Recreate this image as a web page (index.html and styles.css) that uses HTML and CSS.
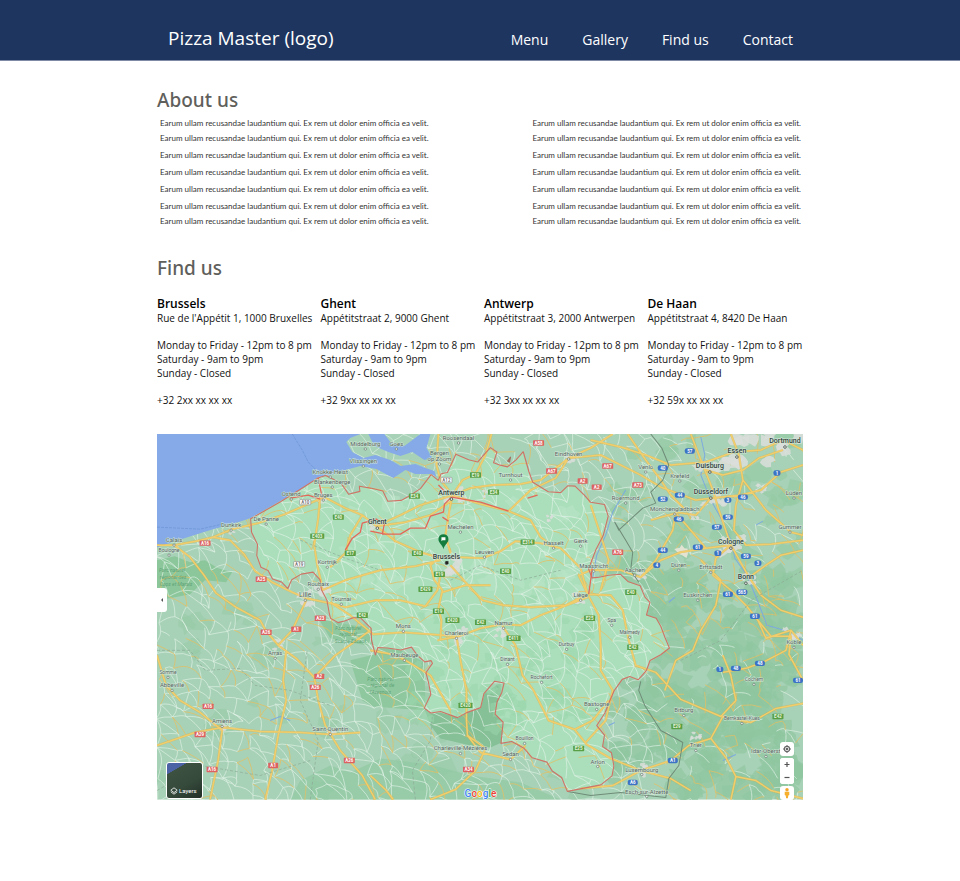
FILE: index.html
```html
<!DOCTYPE html>
<html lang="en">
<head>
<meta charset="utf-8">
<meta name="viewport" content="width=device-width, initial-scale=1">
<title>Pizza Master</title>
<link rel="stylesheet" href="styles.css">
</head>
<body>
<header class="site-header">
  <div class="container header-row">
    <a class="logo" href="#">Pizza Master (logo)</a>
    <nav class="nav">
      <a href="#menu">Menu</a>
      <a href="#gallery">Gallery</a>
      <a href="#find-us">Find us</a>
      <a href="#contact">Contact</a>
    </nav>
  </div>
</header>
<main class="container">
  <section class="about" id="about">
    <h2>About us</h2>
    <div class="about-columns">
      <div class="copy">
        <p>Earum ullam recusandae laudantium qui. Ex rem ut dolor enim officia ea velit.<br>Earum ullam recusandae laudantium qui. Ex rem ut dolor enim officia ea velit.</p>
        <p>Earum ullam recusandae laudantium qui. Ex rem ut dolor enim officia ea velit.</p>
        <p>Earum ullam recusandae laudantium qui. Ex rem ut dolor enim officia ea velit.</p>
        <p>Earum ullam recusandae laudantium qui. Ex rem ut dolor enim officia ea velit.</p>
        <p>Earum ullam recusandae laudantium qui. Ex rem ut dolor enim officia ea velit.<br>Earum ullam recusandae laudantium qui. Ex rem ut dolor enim officia ea velit.</p>
      </div>
      <div class="copy">
        <p>Earum ullam recusandae laudantium qui. Ex rem ut dolor enim officia ea velit.<br>Earum ullam recusandae laudantium qui. Ex rem ut dolor enim officia ea velit.</p>
        <p>Earum ullam recusandae laudantium qui. Ex rem ut dolor enim officia ea velit.</p>
        <p>Earum ullam recusandae laudantium qui. Ex rem ut dolor enim officia ea velit.</p>
        <p>Earum ullam recusandae laudantium qui. Ex rem ut dolor enim officia ea velit.</p>
        <p>Earum ullam recusandae laudantium qui. Ex rem ut dolor enim officia ea velit.<br>Earum ullam recusandae laudantium qui. Ex rem ut dolor enim officia ea velit.</p>
      </div>
    </div>
  </section>
  <section class="find" id="find-us">
    <h2>Find us</h2>
    <div class="stores">
      <article class="store">
        <h3>Brussels</h3>
        <p>Rue de l'Appétit 1, 1000 Bruxelles</p>
        <p>Monday to Friday - 12pm to 8 pm<br>Saturday - 9am to 9pm<br>Sunday - Closed</p>
        <p>+32 2xx xx xx xx</p>
      </article>
      <article class="store">
        <h3>Ghent</h3>
        <p>Appétitstraat 2, 9000 Ghent</p>
        <p>Monday to Friday - 12pm to 8 pm<br>Saturday - 9am to 9pm<br>Sunday - Closed</p>
        <p>+32 9xx xx xx xx</p>
      </article>
      <article class="store">
        <h3>Antwerp</h3>
        <p>Appétitstraat 3, 2000 Antwerpen</p>
        <p>Monday to Friday - 12pm to 8 pm<br>Saturday - 9am to 9pm<br>Sunday - Closed</p>
        <p>+32 3xx xx xx xx</p>
      </article>
      <article class="store">
        <h3>De Haan</h3>
        <p>Appétitstraat 4, 8420 De Haan</p>
        <p>Monday to Friday - 12pm to 8 pm<br>Saturday - 9am to 9pm<br>Sunday - Closed</p>
        <p>+32 59x xx xx xx</p>
      </article>
    </div>
    <div class="map">
      <svg id="map-canvas" class="map-canvas" viewBox="157 434 645 365" role="img" aria-label="Map of Belgium"></svg>
      <button class="map-btn drawer" type="button" aria-label="Open side panel"><svg viewBox="0 0 10 24" width="10" height="24"><path d="M6 10v4l-2-2z" fill="#555"/></svg></button>
      <button class="layers" type="button">
        <svg viewBox="0 0 10 10" width="8" height="8" fill="none" stroke="#fff"><path d="M5 1l4 3-4 3-4-3zM1 6l4 3 4-3"/></svg>
        Layers
      </button>
      <div class="controls">
        <button class="map-btn" type="button" aria-label="Your location"><svg viewBox="0 0 14 14" width="14" height="14"><circle cx="7" cy="7" r="2.6" fill="none" stroke="#666" stroke-width="1.1"/><circle cx="7" cy="7" r="1.3" fill="#666"/><path d="M7 3v2M7 9v2M3 7h2M9 7h2" stroke="#666"/></svg></button>
        <div class="zoom">
          <button class="map-btn" type="button" aria-label="Zoom in"><svg viewBox="0 0 14 13" width="14" height="13"><path d="M4.500 6.500h5M7 4v5" stroke="#555" stroke-width="1.2"/></svg></button>
          <button class="map-btn" type="button" aria-label="Zoom out"><svg viewBox="0 0 14 13" width="14" height="13"><path d="M4.500 6.500h5" stroke="#555" stroke-width="1.2"/></svg></button>
        </div>
        <button class="map-btn" type="button" aria-label="Street View"><svg viewBox="0 0 14 14" width="14" height="14"><circle cx="7" cy="3.700" r="1.700" fill="#f2a52b"/><path d="M4.700 5.800h4.600v3.200l-1 .4-.4 2.800H6.100l-.4-2.800-1-.4z" fill="#f7b02c"/></svg></button>
      </div>
    </div>
  </section>
</main>
<script src="map.js"></script>
</body>
</html>
```
FILE: styles.css
```css
* { box-sizing: border-box; }

body {
  margin: 0;
  background: #fff;
  color: #111;
  font-family: "Open Sans", "Noto Sans", sans-serif;
}

h2, h3, p { margin: 0; }

a { color: inherit; text-decoration: none; }

.container {
  max-width: 646px;
  margin: 0 auto;
}

.site-header {
  background: #1e3560;
  border-bottom: 1px solid #7d8ba6;
  color: #fff;
}

.header-row {
  display: flex;
  justify-content: space-between;
  align-items: center;
  padding: 24px 10px 8px 11px;
}

.logo { font-size: 19px; line-height: 28px; }

.nav {
  display: flex;
  gap: 34px;
  padding-top: 4px;
  font-size: 14px;
  line-height: 24px;
}

h2 {
  color: #5f5f5c;
  font-family: "Noto Sans", sans-serif;
  font-size: 19px;
  font-weight: 500;
  line-height: 28px;
}

.about { padding-top: 25px; }

.about-columns {
  display: flex;
  justify-content: space-between;
  gap: 24px;
  padding: 2px 2px 0 3px;
}

.copy {
  display: flex;
  flex-direction: column;
  gap: 2px;
  color: #333;
  font-family: Lato, sans-serif;
  font-size: 8px;
  line-height: 15px;
}

.find { padding-top: 25px; }

.stores {
  display: grid;
  grid-template-columns: repeat(4, 1fr);
  gap: 8px;
  padding-top: 15px;
}

.store {
  font-size: 10px;
  line-height: 14px;
}

.store h3 {
  font-size: 12px;
  font-weight: 600;
  line-height: 14px;
  color: #000;
}

.store p + p { margin-top: 13px; }

.map {
  position: relative;
  margin: 27px 0 40px;
}

.map-canvas {
  display: block;
  width: 100%;
  height: auto;
  font-family: Roboto, sans-serif;
}

.map-btn {
  display: flex;
  justify-content: center;
  padding: 0;
  border: 0;
  border-radius: 3px;
  background: #fff;
}

.drawer {
  position: absolute;
  top: 154px;
  left: 0;
  border-radius: 0 3px 3px 0;
}

.controls {
  position: absolute;
  right: 9px;
  bottom: 0;
  display: flex;
  flex-direction: column;
  gap: 2px;
}

.zoom {
  display: flex;
  flex-direction: column;
  background: #fff;
  border-radius: 3px;
}

.layers {
  position: absolute;
  left: 9px;
  bottom: 1px;
  display: flex;
  align-items: flex-end;
  gap: 1px;
  width: 37px;
  height: 37px;
  padding: 0 3px 3px;
  border: 1px solid #fff;
  border-radius: 3px;
  background: linear-gradient(150deg, #4b62a5 20%, #3d5141 21%, #354a3b 60%, #222e26);
  color: #fff;
  font: 6px/8px Roboto, sans-serif;
}
```
FILE: map.js
```js
const NS = "http://www.w3.org/2000/svg";
const svg = document.getElementById("map-canvas");

function add(name, attrs, text) {
  const el = document.createElementNS(NS, name);
  for (const key in attrs) el.setAttribute(key, attrs[key]);
  if (text) el.textContent = text;
  svg.appendChild(el);
  return el;
}

function path(d, attrs) {
  return add("path", Object.assign({ d, fill: "none", "stroke-linejoin": "round" }, attrs));
}

// Repeatable pseudo-random numbers, so that the terrain is the same on every load.
let seed = 7;
function rnd() {
  seed = (seed * 16807) % 2147483647;
  return seed / 2147483647;
}

function blob(x, y, r, fill, opacity) {
  let d = "";
  for (let i = 0; i < 11; i++) {
    const a = i / 11 * Math.PI * 2;
    const q = r * (0.5 + rnd() * 0.8);
    d += (i ? "L" : "M") + (x + Math.cos(a) * q * 1.2).toFixed(1) + " " + (y + Math.sin(a) * q).toFixed(1);
  }
  path(d + "z", { fill, opacity });
}

const belgium = "M250 519L251 532 257 545 256 556 260 567 268 570 273 579 281 582 288 588 292 580 302 574 312 572 319 579 321 590 326 600 328 612 330 618 337 622 345 620 352 617 360 618 370 628 372 640 375 654 378 648 388 648 400 650 411 646 416 654 424 662 430 660 431 664 425 672 427 682 431 693 424 707 430 713 440 712 458 717 466 712 480 708 484 693 495 680 503 682 502 692 497 702 494 713 503 722 501 742 512 741 523 747 531 757 546 761 552 770 562 777 567 791 580 788 600 784 612 775 614 765 610 752 602 745 603 735 597 725 604 712 608 702 613 690 621 680 628 677 638 680 645 670 650 661 660 655 669 647 665 637 661 625 655 618 646 615 650 602 645 596 639 585 628 582 620 575 608 574 596 577 591 578 588 568 596 550 602 535 608 515 604 505 590 503 583 496 575 487 568 485 560 492 548 491 533 483 528 472 522 452 515 460 508 466 499 465 493 462 497 452 490 448 484 454 478 462 468 460 455 454 448 472 440 473 438 480 431 474 420 488 410 495 400 500 388 501 383 490 370 487 358 486 360 492 348 494 340 482 325 476 318 477 300 490 280 501z";
const sea = "M157 434H360L350 438 346 442 352 452 363 458 375 455 390 460 400 466 415 464 425 468 434 471 436 477 431 474 415 474 405 470 393 478 376 469 360 466 345 470 330 475 318 477 300 490 280 501 250 518 235 523 213 529 200 533 175 541 157 547z";

add("rect", { x: 157, y: 434, width: 645, height: 365, fill: "#a8d2b7" });

// Woodland: sparse in the west, dense in the Eifel and the Ardennes.
for (let i = 0; i < 55; i++) blob(160 + rnd() * 450, 560 + rnd() * 235, 4 + rnd() * 9, "#96caa5", 0.5);
for (let i = 0; i < 210; i++) {
  const x = 600 + rnd() * 200, y = 575 + rnd() * 220;
  blob(x, y, 5 + rnd() * 11, "#8fc6a0", 0.65);
}
for (let i = 0; i < 45; i++) blob(610 + rnd() * 190, 440 + rnd() * 140, 4 + rnd() * 9, "#93c9a3", 0.6);
path("M157 560L175 556 190 562 205 560 218 568 232 572 226 582 205 580 190 594 170 598 157 600z", { fill: "#8cc79b" });
path("M318 618L335 622 370 628 375 654 350 660 362 700 372 706 425 710 424 662 400 650 360 644 330 638z", { fill: "#8fc89e" });
path("M424 708L458 717 484 693 500 682 502 722 501 742 490 747 470 745 440 738 430 725z", { fill: "#86c096" });
path("M300 780L330 765 350 772 380 758 430 764 470 775 520 782 560 799H290z", { fill: "#92c9a2", opacity: "0.7" });
path(belgium, { fill: "#abdfbb" });
for (let i = 0; i < 70; i++) blob(400 + rnd() * 190, 600 + rnd() * 130, 3 + rnd() * 6, "#99d5ab", 0.5);
for (let i = 0; i < 50; i++) blob(300 + rnd() * 290, 495 + rnd() * 120, 3 + rnd() * 6, "#b9e4c6", 0.6);

// Minor roads: a jittered grid with most of its edges drawn.
const step = 13, cols = 51, rows = 30, grid = [];
for (let r = 0; r < rows; r++) {
  grid.push([]);
  for (let c = 0; c < cols; c++) grid[r].push([155 + c * step + rnd() * 11, 430 + r * step + rnd() * 11]);
}
let minor = "", lanes = "";
for (let r = 0; r < rows - 1; r++) {
  for (let c = 0; c < cols - 1; c++) {
    const a = grid[r][c], targets = [grid[r][c + 1], grid[r + 1][c], grid[r + 1][c + 1]];
    for (const b of targets) {
      const k = rnd();
      const seg = `M${a[0].toFixed(1)} ${a[1].toFixed(1)}Q${((a[0] + b[0]) / 2 + rnd() * 4).toFixed(1)} ${((a[1] + b[1]) / 2 - rnd() * 4).toFixed(1)} ${b[0].toFixed(1)} ${b[1].toFixed(1)}`;
      if (k < 0.5) { if (a[0] < 650 || k < 0.1) minor += seg; }
      else if (k < 0.63) lanes += seg;
    }
  }
}
path(minor, { stroke: "#e2f3e7", "stroke-width": 0.8, opacity: 0.8 });
path(lanes, { stroke: "#e3bf62", "stroke-width": 0.9, opacity: 0.85 });

path(sea, { fill: "#85aae7" });
path("M368 434H384L390 442 404 446 412 440 420 434H430L426 448 432 458 424 460 412 452 400 456 388 452 374 446z", { fill: "#85aae7" });
path("M292 434L302 450 308 462 316 470M157 527L200 529 222 524", { stroke: "#6d93d6", "stroke-width": 0.7, "stroke-dasharray": "3 1" });
path("M700 437L704 455 700 475 710 500 720 518 730 540 734 558 746 575 756 599 766 625 790 632 802 640M592 578L596 555 605 535 612 512 625 490M270 720L280 716 290 720M608 725L614 722M722 760L735 754M755 525L762 521M668 602L674 597", { stroke: "#7daade", "stroke-width": 1 });

// Built-up areas.
[[447,565,12],[452,495,10],[376,526,6],[322,586,9],[306,598,9],[456,636,9],[501,631,6],[580,597,7],[733,452,19],[705,470,11],[782,448,17],[712,498,10],[730,545,12],[747,578,7],[640,577,6],[791,634,8],[568,458,7],[278,645,6],[220,725,6],[330,733,5],[640,770,7],[232,530,4],[695,735,5],[323,500,4],[487,494,4],[550,518,4],[760,488,5],[693,515,5]].forEach(([x, y, r]) => {
  for (let i = 0; i < 7; i++) blob(x + (rnd() - 0.5) * r * 2, y + (rnd() - 0.5) * r * 1.6, r * 0.35, "#dbdedb", 0.85);
});
blob(682, 551, 6, "#e2e3d2", 1);

const roads = [
  "M157 545L174 545 196 541 213 537 232 529 258 523 285 514 310 503 324 497 345 508 362 515 376 526 395 541 420 552 437 557 458 557 482 558 500 551 515 541 540 543 560 548 580 568 587 594",
  "M174 545L190 557 204 575 216 593 236 607 260 620 266 631 278 645",
  "M213 537L230 540 244 554 255 571 272 582 292 592 306 598 335 604 345 607 375 600 400 600 425 606 437 590 440 575",
  "M320 495L318 518 314 545 317 565 321 582 322 590 M362 515L350 535 345 553 330 567",
  "M376 526L400 515 420 505 440 499 452 495 470 488 492 485 520 484 540 480 568 458 590 448 612 434",
  "M452 495L449 510 445 535 450 553 M452 495L480 504 508 511 530 520 540 537 555 548 M452 495L462 480 475 474 485 455 491 434",
  "M376 526L405 522 430 515 452 500 M452 495L440 480 436 465 438 434",
  "M440 557L430 565 434 580 442 590 438 608 441 620 440 640 M450 565L465 582 482 600 503 605 530 607 565 605 587 594",
  "M437 640L458 636 480 628 501 624 520 625 540 615 587 597 M501 624L515 645 522 675 533 690 548 720 574 729 586 744 610 758 640 770",
  "M330 602L350 615 373 634 403 632 430 634 456 636 M456 636L460 660 466 690 466 720 467 735 480 752 510 759 525 745",
  "M278 645L292 630 306 600 M278 645L296 658 314 677 335 655 352 643 370 630 M286 650L283 680 286 700 278 735 272 770 265 799",
  "M157 655L166 685 180 700 200 712 222 730 218 760 210 799 M157 745L195 732 222 727 260 731 300 732 330 734 360 732",
  "M314 677L318 700 325 725 340 750 362 775 375 799 M370 650L397 655 430 675 450 710",
  "M467 735L485 748 475 770 455 789 430 799 M370 775L385 789 393 799",
  "M587 594L578 575 590 570 620 570 640 577 660 560 680 552 705 548 730 545 M587 594L598 615 600 645 600 670 612 690 605 720 585 742",
  "M587 594L610 595 622 610 628 640 635 665 655 672 680 699 720 716 735 700 730 675 722 655",
  "M640 577L655 560 672 530 675 512 695 515 710 498 M590 505L600 535 608 560 600 590",
  "M568 458L600 455 640 475 660 487 695 500 712 498 740 495 760 490 780 472 802 465",
  "M590 440L620 447 645 455 670 465 705 462 733 452 760 450 782 440 802 450",
  "M690 434L700 460 712 490 718 510 730 545 747 575 760 595 780 610 802 617",
  "M730 434L738 455 742 480 735 505 733 530 745 545 770 544 802 540 M705 470L722 475 742 470 758 458 782 450",
  "M650 520L675 513 690 530 705 548 M685 510L670 495 660 480 645 460 627 434",
  "M730 545L715 558 712 575 730 590 745 605 757 620 765 638 790 630 802 645 M700 560L720 580 715 605 700 630 692 650 675 660 664 690",
  "M757 620L770 636 790 636 788 654 802 680 M722 672L745 668 762 662 785 650 790 630",
  "M640 770L670 760 688 745 710 738 722 716 750 722 775 708 802 703 M710 738L725 757 735 776 755 780 770 790 802 798",
  "M580 788L612 785 640 770 670 778 690 790 M735 776L730 799 M574 729L592 720 608 700",
  "M747 578L765 565 780 555 802 550 M742 480L765 510 790 532 802 535",
  "M322 590L345 580 380 570 415 566 440 560 M442 592L465 585 490 585 M508 511L530 490 555 478 568 458"
].join("");
path(roads, { stroke: "#dcae3f", "stroke-width": 2.3, opacity: 0.5 });
path(roads, { stroke: "#f1cd6b", "stroke-width": 1.5 });

// Borders.
path("M650 434L661 448 668 465 662 480 650 492 655 503 642 508 618 530 614 522 625 540 632 552 630 570 638 582M640 681L638 690 644 705 660 730 675 738 682 742 678 765 668 778 665 797M567 791L590 795 620 792 665 797", { stroke: "#6f8c78", "stroke-width": 1 });
path("M157 650L190 650 205 670 240 668 255 685 290 690 330 705 M300 540L345 558 380 570 M450 580L480 565 520 580 560 570 M157 790L200 765 260 775 310 760 M415 799L412 770 430 740 432 715 M680 660L720 640 750 600 802 570 M310 799L318 740 300 700 307 650", { stroke: "#8cab96", "stroke-width": 0.7, "stroke-dasharray": "3 2" });
const jagged = belgium.replace(/(\d+) (\d+)/g, (m, x, y) => `${(+x + rnd() * 2 - 1).toFixed(1)} ${(+y + rnd() * 2 - 1).toFixed(1)}`);
path(jagged, { stroke: "#cf7366", "stroke-width": 1.1 });
path("M345 550L352 538 360 532 362 523 376 519 384 524 382 534 400 534 410 528 425 528 430 516 443 512 444 504 451 497 M451 497L480 502 508 511 M370 531L385 534 M445 492L438 485 M442 517L448 521 M318 478L322 498 M290 498L308 495 320 499 M588 594L590 580 592 565 M527 498L537 495", { stroke: "#e2685a", "stroke-width": 1.3 });
path("M507 461l3-4-1 5z", { fill: "#a36b5c", stroke: "#a36b5c" });

// Place names: text, centre x, baseline y, size.
[["Middelburg",365,446,6],["Goes",396,446,6],["Vlissingen",363,463,6],["Roosendaal",458,440,6],["Bergen",439,455,6],["op Zoom",439,461,6],["Knokke-Heist",330,474,6],["Blankenberge",332,484,6],["Ostend",291,496,6],["Bruges",323,497,6],["De Panne",266,521,6],["Dunkirk",231,527,6],["Calais",174,542,6],["Boulogne",169,552,5],["Kortrijk",327,564,6],["Roubaix",318,586,6],["Lille",305,597,7],["Tournai",341,601,6],["Turnhout",510,477,6],["Eindhoven",568,456,6],["Mechelen",460,529,6],["Leuven",484,554,6],["Hasselt",553,545,6],["Genk",580,543,6],["Maastricht",593,568,6],["Liège",580,597,6],["Venlo",645,469,6],["Krefeld",679,478,6],["Roermond",625,500,6],["Mönchengladbach",674,511,6],["Aachen",634,572,6],["Düren",678,567,6],["Erftstadt",710,569,6],["Euskirchen",697,597,6],["Lüden",793,495,6],["Gummer",789,529,6],["Mons",403,628,6],["Charleroi",456,635,6],["Namur",503,625,6],["Dinant",507,661,5],["Durbuy",566,646,5],["Rochefort",541,679,5],["Maubeuge",404,657,6],["Arras",275,655,6],["Somme",168,674,5],["Abbeville",172,687,6],["Amiens",222,723,6],["Saint-Quentin",330,731,6],["Charleville-Mézières",460,750,6],["Sedan",510,756,6],["Bouillon",524,740,5],["Bastogne",596,706,6],["Arlon",597,763,6],["Spa",611,622,5],["Malmedy",629,634,5],["Bitburg",683,712,6],["Cochem",753,681,5],["Bernkastel-Kues",741,720,5],["Trier",695,747,6],["Idar-Oberst",765,753,6],["Koble",793,644,6],["Luxembourg",641,771,6],["Esch-sur-Alzette",646,793,6]].forEach(([t, x, y, s]) => {
  add("circle", { cx: x, cy: y + 3, r: 1.2, fill: "#edf1ed", stroke: "#687a71", "stroke-width": 0.7 });
  add("text", { x, y, "font-size": s, "text-anchor": "middle", fill: "#53645b", stroke: "#d3e7da", "stroke-width": 1, "paint-order": "stroke" }, t);
});
[["Antwerp",451,495],["Ghent",377,524],["Brussels",446,559],["Essen",736,453],["Dortmund",784,443],["Duisburg",709,468],["Düsseldorf",710,494],["Cologne",730,544],["Bonn",745,579]].forEach(([t, x, y]) => {
  add("circle", { cx: x, cy: y + 4, r: 1.3, fill: "#edf1ed", stroke: "#3f4b46", "stroke-width": 0.8 });
  add("text", { x, y, "font-size": 7, "font-weight": 500, "text-anchor": "middle", fill: "#34423c", stroke: "#d3e7da", "stroke-width": 1, "paint-order": "stroke" }, t);
});
[["Parc naturel",348,630],["régional",348,636],["Scarpe-Escaut",350,643],["Parc naturel",380,681],["régional de",382,687],["l'Avesnois",380,694],["Parc naturel",172,572],["régional des",173,579],["Caps et Marais",176,586]].forEach(([t, x, y]) =>
  add("text", { x, y, "font-size": 5, "font-style": "italic", "text-anchor": "middle", fill: "#5fa377" }, t));

// Road shields: text, centre x, centre y.
function shields(list, fill, color, stroke) {
  list.forEach(([t, x, y]) => {
    const w = t.length * 3 + 2 + (t.length < 3 ? 2 : 0);
    add("rect", { x: x - w / 2, y: y - 2.7, width: w, height: 5.4, rx: fill === "#3d73c5" ? 2 : 0.6, fill, stroke: stroke || "none", "stroke-width": 0.6 });
    add("text", { x, y: y + 1.6, "font-size": 4.5, "font-weight": 700, "text-anchor": "middle", fill: color }, t);
  });
}
shields([["E40",338,517],["E403",317,536],["E17",350,553],["E42",362,615],["E34",414,496],["E19",475,475],["E34",493,492],["E314",527,542],["E40",417,553],["E19",439,574],["E40",505,571],["E429",425,589],["E19",438,611],["E420",452,620],["E42",480,622],["E411",513,638],["E420",465,705],["E25",578,748],["E25",589,618],["E40",630,592],["E42",632,647],["E29",676,726],["E42",777,716]], "#589f45", "#e6f4df");
shields([["A16",205,543],["A25",261,579],["A23",320,618],["A58",538,443],["A67",551,471],["A2",582,481],["A67",607,466],["A2",596,487],["A73",637,485],["A76",617,552],["A26",266,632],["A1",296,629],["A2",319,676],["A26",315,687],["A16",208,706],["A29",200,734],["A16",212,769],["A1",273,765],["A26",349,760],["A34",468,769]], "#dc6261", "#fff");
shields([["57",689,451],["40",662,468],["44",679,495],["52",662,499],["3",727,500],["46",742,497],["1",776,473],["46",678,519],["59",727,517],["57",716,527],["44",662,550],["61",697,547],["1",717,553],["59",745,556],["3",757,563],["4",656,565],["61",727,594],["565",741,592],["61",754,616],["1",719,669],["48",735,668],["48",759,663],["61",797,680],["A1",672,760],["A6",632,782]], "#3d73c5", "#fff");
shields([["A12",446,480],["A10",305,502],["A19",299,564]], "#fff", "#777", "#888");

// Store pin.
path("M443 549C442 544 438 543 438 539a5 5 0 0 1 10 0C448 543 444 544 443 549z", { fill: "#147d3d" });
path("M441 537h4v3h-3l-1 1z", { fill: "#fff" });
add("rect", { x: 445, y: 561, width: 3, height: 3, fill: "#222" });

const word = add("text", { x: 480, y: 796, "font-size": 10, "font-weight": 500, "text-anchor": "middle", stroke: "#fff", "stroke-width": 1, "paint-order": "stroke" });
[["G", "#4285f4"], ["o", "#ea4335"], ["o", "#fbbc05"], ["g", "#4285f4"], ["l", "#34a853"], ["e", "#ea4335"]].forEach(([c, fill]) => {
  const span = document.createElementNS(NS, "tspan");
  span.setAttribute("fill", fill);
  span.textContent = c;
  word.appendChild(span);
});
```
